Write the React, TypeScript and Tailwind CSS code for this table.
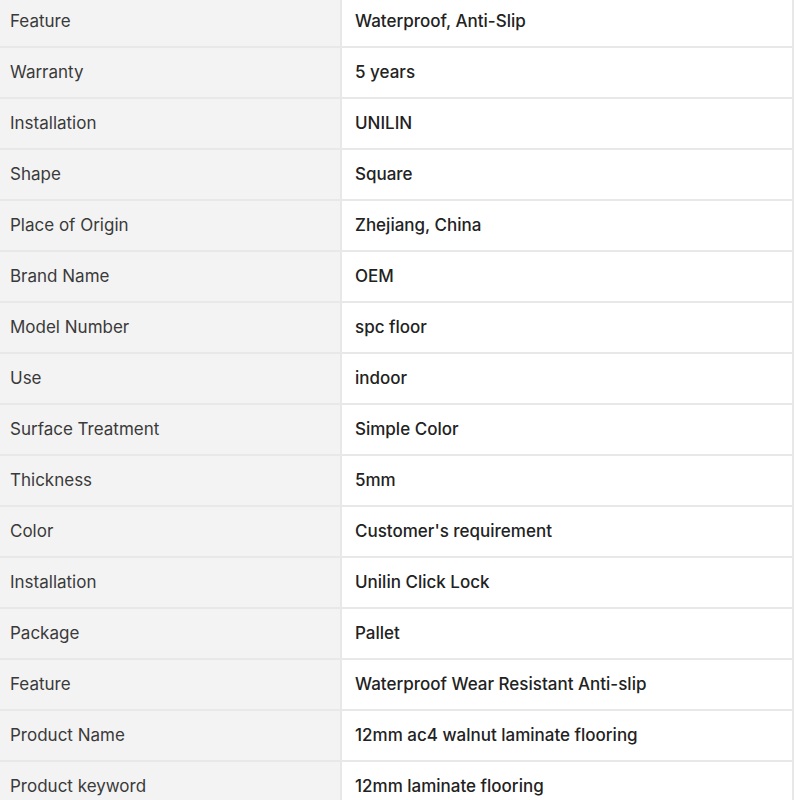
const specs: [string, string][] = [
  ["Feature", "Waterproof, Anti-Slip"],
  ["Warranty", "5 years"],
  ["Installation", "UNILIN"],
  ["Shape", "Square"],
  ["Place of Origin", "Zhejiang, China"],
  ["Brand Name", "OEM"],
  ["Model Number", "spc floor"],
  ["Use", "indoor"],
  ["Surface Treatment", "Simple Color"],
  ["Thickness", "5mm"],
  ["Color", "Customer's requirement"],
  ["Installation", "Unilin Click Lock"],
  ["Package", "Pallet"],
  ["Feature", "Waterproof Wear Resistant Anti-slip"],
  ["Product Name", "12mm ac4 walnut laminate flooring"],
  ["Product keyword", "12mm laminate flooring"],
];

export default function App() {
  return (
    <div className="h-[800px] overflow-hidden bg-white font-['Inter',sans-serif] text-[17px]">
      <div className="-mt-[3px] w-[794px] border-r-2 border-[#e8e8e8]">
        {specs.map(([label, value], i) => (
          <div key={i} className="flex h-[51px] border-b-2 border-[#e8e8e8]">
            <div className="flex w-[342px] shrink-0 items-center border-r-2 border-[#e8e8e8] bg-[#f3f3f3] pl-[10px] text-[#3a3a3a]">
              {label}
            </div>
            <div className="flex flex-1 items-center pl-[13px] font-[450] text-[#222]">
              {value}
            </div>
          </div>
        ))}
      </div>
    </div>
  );
}
